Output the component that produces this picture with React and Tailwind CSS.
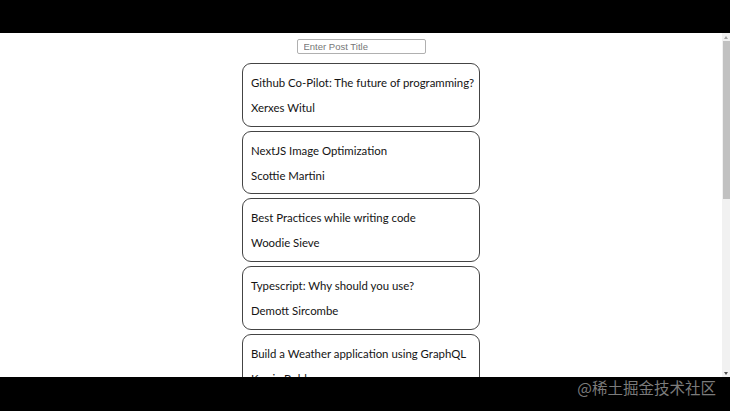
import React from "react";

const posts = [
  ["Github Co-Pilot: The future of programming?", "Xerxes Witul"],
  ["NextJS Image Optimization", "Scottie Martini"],
  ["Best Practices while writing code", "Woodie Sieve"],
  ["Typescript: Why should you use?", "Demott Sircombe"],
  ["Build a Weather application using GraphQL", "Kerrie Bohl"],
  ["React Hooks explained", "Lorne Gwin"],
];

export default function App() {
  return (
    <div className="w-[730px] h-[411px] bg-black flex flex-col overflow-hidden">
      <div className="h-[33px] shrink-0" />
      <div className="h-[344px] shrink-0 bg-white flex">
        <div className="flex-1 overflow-hidden flex flex-col items-center pt-[6px]">
          <input
            placeholder="Enter Post Title"
            className="w-[129px] h-[15px] shrink-0 border border-[#b0b0b0] rounded-[2px] px-[6px] text-[9.5px] text-[#222] placeholder:text-[#777] outline-none"
            style={{ fontFamily: "'Liberation Sans', Arial, sans-serif" }}
          />
          <div className="mt-[9px] flex flex-col gap-[4.2px]">
            {posts.map(([title, author]) => (
              <div
                key={title}
                className="w-[238px] h-[63.5px] shrink-0 border border-[#444] rounded-[9px] px-[8px] pt-[12px] flex flex-col gap-[11px] text-[11.4px] leading-[14px] text-[#141414]"
                style={{ fontFamily: "Lato, sans-serif" }}
              >
                <p className="whitespace-nowrap">{title}</p>
                <p className="whitespace-nowrap">{author}</p>
              </div>
            ))}
          </div>
        </div>
        <div className="w-[8px] shrink-0 bg-[#f1f1f1] flex flex-col items-center">
          <div className="h-[8px] w-full flex items-center justify-center">
            <div className="w-0 h-0 border-l-[2px] border-r-[2px] border-b-[3px] border-l-transparent border-r-transparent border-b-[#a3a3a3]" />
          </div>
          <div className="w-[7px] h-[158px] bg-[#c1c1c1]" />
          <div className="flex-1" />
          <div className="h-[8px] w-full flex items-center justify-center">
            <div className="w-0 h-0 border-l-[2px] border-r-[2px] border-t-[3px] border-l-transparent border-r-transparent border-t-[#505050]" />
          </div>
        </div>
      </div>
      <div className="flex-1 flex justify-end items-start pr-[14px] pt-[1px]">
        <span
          className="text-[15.5px] leading-[18px] text-[#7b7b7b]"
          style={{ fontFamily: "'Noto Sans CJK SC', sans-serif" }}
        >
          @稀土掘金技术社区
        </span>
      </div>
    </div>
  );
}
